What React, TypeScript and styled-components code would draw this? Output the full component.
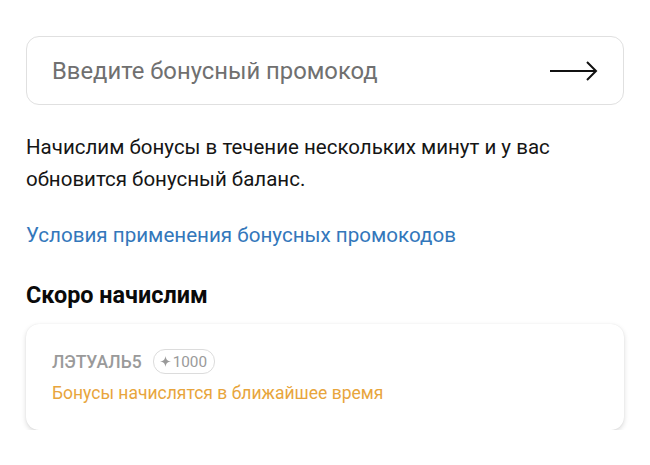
import React from "react";
import styled, { createGlobalStyle } from "styled-components";

const Global = createGlobalStyle`
  html, body { margin: 0; padding: 0; background: #ffffff; }
  body { font-family: Roboto, "Noto Sans", "Liberation Sans", sans-serif; -webkit-font-smoothing: antialiased; }
  * { box-sizing: border-box; }
`;

const Page = styled.div`
  width: 650px;
  padding: 36px 26px 0 26px;
  display: flex;
  flex-direction: column;
`;

const InputBox = styled.div`
  height: 69px;
  border: 1.5px solid #e0e0e0;
  border-radius: 13px;
  display: flex;
  align-items: center;
  justify-content: space-between;
  padding: 0 24px 0 25px;
`;

const Placeholder = styled.span`
  font-family: Roboto, sans-serif;
  font-size: 23.8px;
  color: #707070;
`;

const ArrowButton = styled.div`
  display: flex;
  align-items: center;
  width: 50px;
  height: 24px;
`;

const Text = styled.p`
  margin: 26px 0 0 0;
  font-size: 20.5px;
  line-height: 32px;
  color: #151515;
`;

const Link = styled.a`
  margin-top: 24px;
  font-size: 20.6px;
  line-height: 32px;
  color: #3377bb;
  text-decoration: none;
`;

const Heading = styled.h2`
  margin: 30px 0 0 0;
  font-size: 23.4px;
  line-height: 28px;
  font-weight: 700;
  color: #0a0a0a;
`;

const Card = styled.div`
  margin-top: 15px;
  border-radius: 13px;
  background: #fff;
  box-shadow: 0 2px 5px rgba(0, 0, 0, 0.15), 0 0 1px rgba(0, 0, 0, 0.1);
  padding: 25px 26px 27px 26px;
  display: flex;
  flex-direction: column;
  gap: 9px;
`;

const CardRow = styled.div`
  display: flex;
  align-items: center;
  gap: 11px;
`;

const Code = styled.span`
  font-size: 17.5px;
  font-weight: 500;
  color: #9a9a9a;
`;

const Badge = styled.span`
  display: inline-flex;
  align-items: center;
  gap: 2px;
  height: 25px;
  padding: 0 7px 0 6px;
  border: 1.5px solid #dcdcdc;
  border-radius: 12px;
  font-size: 15.3px;
  color: #9a9a9a;
`;

const Status = styled.span`
  font-size: 17.5px;
  color: #e8a53c;
`;

const Sparkle = () => (
  <svg width="11" height="11" viewBox="0 0 12 12">
    <path d="M6 0 C6.6 4 8 5.4 12 6 C8 6.6 6.6 8 6 12 C5.4 8 4 6.6 0 6 C4 5.4 5.4 4 6 0 Z" fill="#9a9a9a" />
  </svg>
);

const Arrow = () => (
  <svg width="50" height="24" viewBox="0 0 50 24">
    <path d="M1 12 H47" stroke="#111" strokeWidth="2" fill="none" />
    <path d="M38 3 L47 12 L38 21" stroke="#111" strokeWidth="2" fill="none" />
  </svg>
);

export default function App() {
  return (
    <>
      <Global />
      <Page>
        <InputBox>
          <Placeholder>Введите бонусный промокод</Placeholder>
          <ArrowButton>
            <Arrow />
          </ArrowButton>
        </InputBox>
        <Text>
          Начислим бонусы в течение нескольких минут и у вас
          <br />
          обновится бонусный баланс.
        </Text>
        <Link href="#">Условия применения бонусных промокодов</Link>
        <Heading>Скоро начислим</Heading>
        <Card>
          <CardRow>
            <Code>ЛЭТУАЛЬ5</Code>
            <Badge>
              <Sparkle />
              1000
            </Badge>
          </CardRow>
          <Status>Бонусы начислятся в ближайшее время</Status>
        </Card>
      </Page>
    </>
  );
}
